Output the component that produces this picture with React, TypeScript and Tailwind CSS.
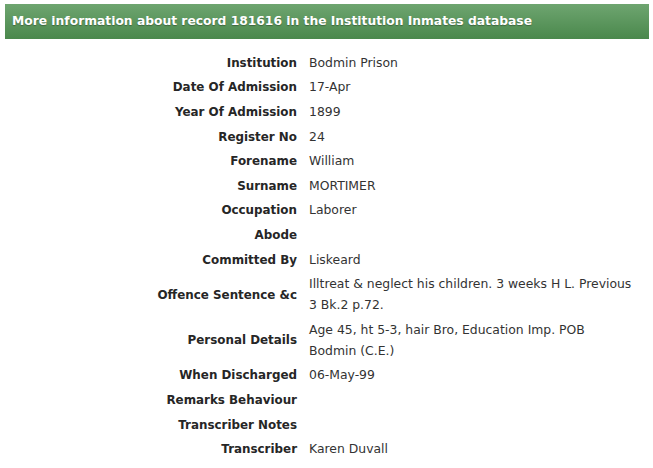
const rows: { label: string; value?: string[] }[] = [
  { label: "Institution", value: ["Bodmin Prison"] },
  { label: "Date Of Admission", value: ["17-Apr"] },
  { label: "Year Of Admission", value: ["1899"] },
  { label: "Register No", value: ["24"] },
  { label: "Forename", value: ["William"] },
  { label: "Surname", value: ["MORTIMER"] },
  { label: "Occupation", value: ["Laborer"] },
  { label: "Abode" },
  { label: "Committed By", value: ["Liskeard"] },
  {
    label: "Offence Sentence &c",
    value: ["Illtreat & neglect his children. 3 weeks H L. Previous", "3 Bk.2 p.72."],
  },
  {
    label: "Personal Details",
    value: ["Age 45, ht 5-3, hair Bro, Education Imp. POB", "Bodmin (C.E.)"],
  },
  { label: "When Discharged", value: ["06-May-99"] },
  { label: "Remarks Behaviour" },
  { label: "Transcriber Notes" },
  { label: "Transcriber", value: ["Karen Duvall"] },
];

export default function App() {
  return (
    <div className="w-[653px] h-[468px] bg-white pt-[4px] px-[4px] font-['DejaVu_Sans',sans-serif] text-[#333]">
      {/* Title bar */}
      <div className="h-[35px] ml-[1px] flex items-center pl-[7px] bg-gradient-to-b from-[#6ea570] to-[#4a884c]">
        <h1 className="text-white text-[12.3px] font-bold [text-shadow:0_1px_1px_rgba(0,0,0,0.3)]">
          More information about record 181616 in the Institution Inmates database
        </h1>
      </div>

      {/* Record table */}
      <div className="mt-[11px] flex flex-col">
        {rows.map((row) => (
          <div key={row.label} className="flex items-center py-[1.8px] leading-[21px]">
            <div className="w-[293px] shrink-0 pt-[1px] leading-[20px] text-right font-bold text-[11.9px] text-[#262626]">
              {row.label}
            </div>
            <div className="pl-[12px] whitespace-nowrap text-[12.4px]">
              {row.value ? (
                row.value.map((line) => <div key={line}>{line}</div>)
              ) : (
                <div>&nbsp;</div>
              )}
            </div>
          </div>
        ))}
      </div>
    </div>
  );
}
